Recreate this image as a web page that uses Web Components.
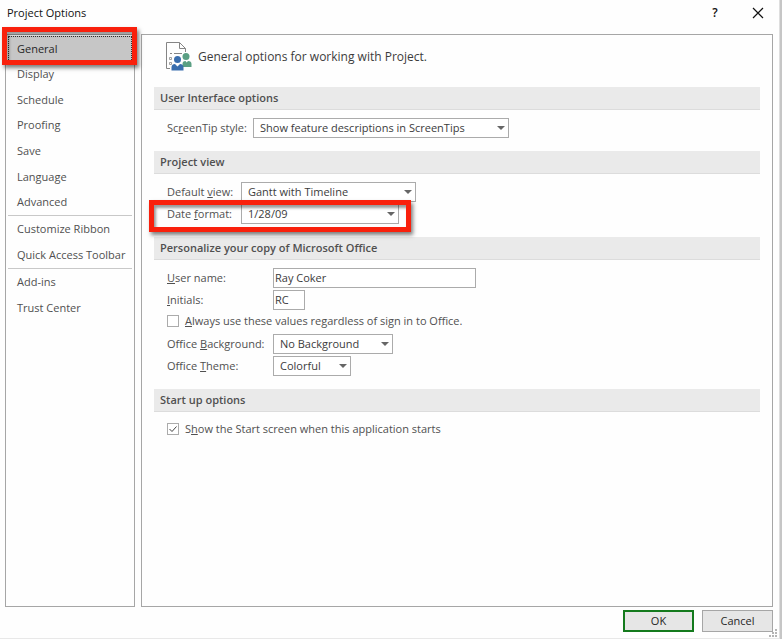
<!DOCTYPE html>
<html lang="en">
<head>
<meta charset="utf-8">
<title>Project Options</title>
<style>
    body {
        margin: 0;
        background: #c6c6c6;
        font-family: "Open Sans", "Noto Sans", sans-serif;
        font-size: 11px;
        line-height: 16px;
        color: #505050;
    }
</style>
</head>
<body>

<options-dialog dialog-title="Project Options">
    <nav-panel slot="nav">
        <nav-group size="large">
            <callout-frame style="--callout-inset: -9px -5px -3px -6px">
                <nav-item selected>General</nav-item>
            </callout-frame>
            <nav-item>Display</nav-item>
            <nav-item>Schedule</nav-item>
            <nav-item>Proofing</nav-item>
            <nav-item>Save</nav-item>
            <nav-item>Language</nav-item>
            <nav-item>Advanced</nav-item>
        </nav-group>
        <nav-group>
            <nav-item>Customize Ribbon</nav-item>
            <nav-item>Quick Access Toolbar</nav-item>
        </nav-group>
        <nav-group>
            <nav-item>Add-ins</nav-item>
            <nav-item>Trust Center</nav-item>
        </nav-group>
    </nav-panel>

    <page-heading>General options for working with Project.</page-heading>

    <option-section heading="User Interface options" style="--label-width: 86px">
        <select-field label="Sc_reenTip style:" value="Show feature descriptions in ScreenTips" style="--field-width: 256px"></select-field>
    </option-section>

    <option-section heading="Project view" style="--label-width: 74px">
        <select-field label="Default _view:" value="Gantt with Timeline" style="--field-width: 175px"></select-field>
        <callout-frame style="--callout-inset: -4px -12px -8px -18px">
            <select-field label="Date _format:" value="1/28/09" style="--field-width: 158px"></select-field>
        </callout-frame>
    </option-section>

    <option-section heading="Personalize your copy of Microsoft Office" style="--label-width: 106px">
        <text-field label="_User name:" value="Ray Coker" style="--field-width: 203px"></text-field>
        <text-field label="_Initials:" value="RC" style="--field-width: 32px"></text-field>
        <check-field label="_Always use these values regardless of sign in to Office."></check-field>
        <select-field label="Office _Background:" value="No Background" style="--field-width: 120px"></select-field>
        <select-field label="Office _Theme:" value="Colorful" style="--field-width: 78px"></select-field>
    </option-section>

    <option-section heading="Start up options">
        <check-field label="S_how the Start screen when this application starts" checked></check-field>
    </option-section>

    <dialog-button slot="actions" primary>OK</dialog-button>
    <dialog-button slot="actions">Cancel</dialog-button>
</options-dialog>

<script>
// "Date _format:" -> "Date <u>f</u>ormat:"
function acceleratorLabel(text) {
    return text.replace(/_(.)/, "<u>$1</u>");
}

class OptionsDialog extends HTMLElement {
    constructor() {
        super();
        this.attachShadow({mode: "open"});
        this.shadowRoot.innerHTML = `
            <style>
                :host {
                    display: grid;
                    grid-template-rows: 34px 1fr 31px;
                    box-sizing: border-box;
                    min-height: 100vh;
                    margin-right: 2px;
                    background: #fefefe;
                    border-right: 1px solid #dedede;
                    border-bottom: 1px solid #e8e8e8;
                }
                header {
                    display: flex;
                    align-items: center;
                    padding: 0 13px 8px 7px;
                    color: #111;
                }
                h1 {
                    flex: 1;
                    margin: 0;
                    font-size: 11px;
                    font-weight: 400;
                }
                header button {
                    display: grid;
                    place-items: center;
                    width: 16px;
                    height: 16px;
                    margin-left: 27px;
                    padding: 0;
                    border: 0;
                    background: none;
                    color: #111;
                    font: 600 12px/16px "Open Sans", sans-serif;
                }
                .corpo {
                    display: grid;
                    grid-template-columns: 130px 1fr;
                    gap: 6px;
                    padding: 0 6px 0 5px;
                }
                main {
                    border: 1px solid #a6a6a6;
                    padding: 0 12px;
                    min-width: 0;
                }
                footer {
                    display: flex;
                    justify-content: flex-end;
                    align-items: flex-start;
                    gap: 8px;
                    padding: 3px 6px 0 0;
                    position: relative;
                }
                .grip {
                    position: absolute;
                    right: 2px;
                    bottom: 1px;
                    fill: #b4b4b4;
                }
            </style>
            <header>
                <h1>${this.getAttribute("dialog-title")}</h1>
                <button type="button" aria-label="Help">?</button>
                <button type="button" aria-label="Close">
                    <svg width="12" height="12" viewBox="0 0 12 12" fill="none" stroke="#111" stroke-width="1.2"><path d="M1 1l10 10M11 1L1 11"/></svg>
                </button>
            </header>
            <div class="corpo">
                <slot name="nav"></slot>
                <main><slot></slot></main>
            </div>
            <footer>
                <slot name="actions"></slot>
                <svg class="grip" width="8" height="8" viewBox="0 0 8 8"><path d="M6 0h2v2H6zM3 3h2v2H3zM6 3h2v2H6zM0 6h2v2H0zM3 6h2v2H3zM6 6h2v2H6z"/></svg>
            </footer>
        `;
    }
}

class NavPanel extends HTMLElement {
    constructor() {
        super();
        this.attachShadow({mode: "open"});
        this.shadowRoot.innerHTML = `
            <style>
                :host {
                    display: block;
                    border: 1px solid #a6a6a6;
                }
                nav {
                    padding: 1px 2px 0;
                }
            </style>
            <nav><slot></slot></nav>
        `;
    }
}

class NavGroup extends HTMLElement {
    constructor() {
        super();
        this.attachShadow({mode: "open"});
        this.shadowRoot.innerHTML = `
            <style>
                :host {
                    display: grid;
                    grid-auto-rows: 1fr;
                    height: 52px;
                }
                :host([size="large"]) {
                    height: 179px;
                }
                :host(:not(:first-child)) {
                    border-top: 1px solid #c8c8c8;
                }
            </style>
            <slot></slot>
        `;
    }
}

class NavItem extends HTMLElement {
    constructor() {
        super();
        this.attachShadow({mode: "open"});
        this.shadowRoot.innerHTML = `
            <style>
                :host {
                    display: grid;
                    height: 100%;
                }
                a {
                    display: flex;
                    align-items: center;
                    padding: 0 8px;
                    border: 1px solid transparent;
                    color: inherit;
                    text-decoration: none;
                    white-space: nowrap;
                }
                :host([selected]) a {
                    background: #c6c6c6;
                    border: 1px dotted #333;
                    color: #262626;
                }
            </style>
            <a href="#"><slot></slot></a>
        `;
    }
}

// Red marker drawn around whatever is slotted in
class CalloutFrame extends HTMLElement {
    constructor() {
        super();
        this.attachShadow({mode: "open"});
        this.shadowRoot.innerHTML = `
            <style>
                :host {
                    display: block;
                    position: relative;
                }
                .marca {
                    position: absolute;
                    inset: var(--callout-inset, -4px);
                    border: 5px solid #f9200c;
                    box-shadow: 2px 3px 4px rgba(0, 0, 0, .5), inset 2px 3px 3px rgba(0, 0, 0, .4);
                    pointer-events: none;
                }
            </style>
            <slot></slot>
            <div class="marca"></div>
        `;
    }
}

class PageHeading extends HTMLElement {
    constructor() {
        super();
        this.attachShadow({mode: "open"});
        this.shadowRoot.innerHTML = `
            <style>
                :host {
                    display: flex;
                    align-items: center;
                    gap: 5px;
                    height: 44px;
                    padding: 0 12px;
                    margin-bottom: 8px;
                }
                h2 {
                    margin: 0;
                    font-size: 12px;
                    font-weight: 400;
                    color: #3c3c3c;
                }
            </style>
            <svg width="27" height="30" viewBox="0 0 27 30">
                <path d="M4 26.500H.5V.5H13.500L19.500 6.500V10M13.500 .5V6.500H19.500" fill="none" stroke="#858585"/>
                <path d="M4 11.500h2M8 11.500h8" stroke="#858585"/>
                <path d="M3.500 15.500h2v2h-2zM3.500 20.500h2v2h-2z" fill="none" stroke="#8a8a8a" stroke-width=".8"/>
                <g fill="#5a9f83">
                    <circle cx="20" cy="14.500" r="3.500"/>
                    <path d="M16.500 25v-3q0-3 3-3l1.200 1.500L22 19q3.500 0 3.500 3v3z"/>
                </g>
                <g fill="#3a6eae">
                    <circle cx="11.500" cy="17.500" r="4.200" fill="#fefefe"/>
                    <circle cx="11.500" cy="17.500" r="3.500"/>
                    <path d="M5.500 28.500V25.500q0-3.500 3.500-3.500l2.500 2.500L14 22q3.500 0 3.500 3.500v3z"/>
                </g>
            </svg>
            <h2><slot></slot></h2>
        `;
    }
}

class OptionSection extends HTMLElement {
    constructor() {
        super();
        this.attachShadow({mode: "open"});
        this.shadowRoot.innerHTML = `
            <style>
                :host {
                    display: block;
                }
                h3 {
                    margin: 0;
                    padding: 3px 6px;
                    background: #eaeaea;
                    border-bottom: 1px solid #dcdcdc;
                    font-size: 11px;
                    font-weight: 600;
                }
                .linhas {
                    display: flex;
                    flex-direction: column;
                    align-items: flex-start;
                    gap: 2px;
                    padding: 8px 12px 13px 13px;
                }
            </style>
            <h3>${this.getAttribute("heading")}</h3>
            <div class="linhas"><slot></slot></div>
        `;
    }
}

const fieldStyle = `
    :host {
        display: grid;
        grid-template-columns: var(--label-width) var(--field-width);
        align-items: center;
    }
    label {
        white-space: nowrap;
    }
    input, select {
        box-sizing: border-box;
        width: 100%;
        height: 20px;
        margin: 0;
        border: 1px solid #ababab;
        border-radius: 0;
        background: #fff;
        color: #3c3c3c;
        font: inherit;
    }
`;

class SelectField extends HTMLElement {
    constructor() {
        super();
        this.attachShadow({mode: "open"});
        this.shadowRoot.innerHTML = `
            <style>
                ${fieldStyle}
                .combo {
                    display: grid;
                    align-items: center;
                }
                select, svg {
                    grid-area: 1 / 1;
                }
                select {
                    appearance: none;
                    padding: 0 16px 0 6px;
                }
                svg {
                    justify-self: end;
                    margin-right: 4px;
                    pointer-events: none;
                }
            </style>
            <label for="campo">${acceleratorLabel(this.getAttribute("label"))}</label>
            <div class="combo">
                <select id="campo"><option>${this.getAttribute("value")}</option></select>
                <svg width="8" height="4" viewBox="0 0 8 4"><path d="M0 0h8L4 4z" fill="#666"/></svg>
            </div>
        `;
    }
}

class TextField extends HTMLElement {
    constructor() {
        super();
        this.attachShadow({mode: "open"});
        this.shadowRoot.innerHTML = `
            <style>
                ${fieldStyle}
                input {
                    padding: 0 1px 2px;
                }
            </style>
            <label for="campo">${acceleratorLabel(this.getAttribute("label"))}</label>
            <input id="campo" type="text" value="${this.getAttribute("value")}">
        `;
    }
}

class CheckField extends HTMLElement {
    constructor() {
        super();
        this.attachShadow({mode: "open"});
        this.shadowRoot.innerHTML = `
            <style>
                :host {
                    display: block;
                    padding-bottom: 2px;
                    line-height: 18px;
                }
                label {
                    display: flex;
                    align-items: center;
                    gap: 6px;
                }
                .caixa {
                    display: grid;
                }
                input, svg {
                    grid-area: 1 / 1;
                }
                input {
                    appearance: none;
                    box-sizing: border-box;
                    width: 12px;
                    height: 12px;
                    margin: 0;
                    border: 1px solid #ababab;
                    background: #fff;
                }
                svg {
                    visibility: hidden;
                    pointer-events: none;
                }
                input:checked + svg {
                    visibility: visible;
                }
            </style>
            <label>
                <span class="caixa">
                    <input type="checkbox" ${this.hasAttribute("checked") ? "checked" : ""}>
                    <svg width="12" height="12" viewBox="0 0 12 12" fill="none" stroke="#444"><path d="M2.500 6l2.500 2.500 4.500-5"/></svg>
                </span>
                <span>${acceleratorLabel(this.getAttribute("label"))}</span>
            </label>
        `;
    }
}

class DialogButton extends HTMLElement {
    constructor() {
        super();
        this.attachShadow({mode: "open"});
        this.shadowRoot.innerHTML = `
            <style>
                :host {
                    display: block;
                }
                button {
                    box-sizing: border-box;
                    width: 71px;
                    height: 22px;
                    padding: 0;
                    border: 1px solid #a6a6a6;
                    background: #e6e6e6;
                    color: #262626;
                    font: inherit;
                }
                :host([primary]) button {
                    border: 2px solid #147a1d;
                }
            </style>
            <button type="button"><slot></slot></button>
        `;
    }
}

customElements.define("options-dialog", OptionsDialog);
customElements.define("nav-panel", NavPanel);
customElements.define("nav-group", NavGroup);
customElements.define("nav-item", NavItem);
customElements.define("callout-frame", CalloutFrame);
customElements.define("page-heading", PageHeading);
customElements.define("option-section", OptionSection);
customElements.define("select-field", SelectField);
customElements.define("text-field", TextField);
customElements.define("check-field", CheckField);
customElements.define("dialog-button", DialogButton);
</script>
</body>
</html>
